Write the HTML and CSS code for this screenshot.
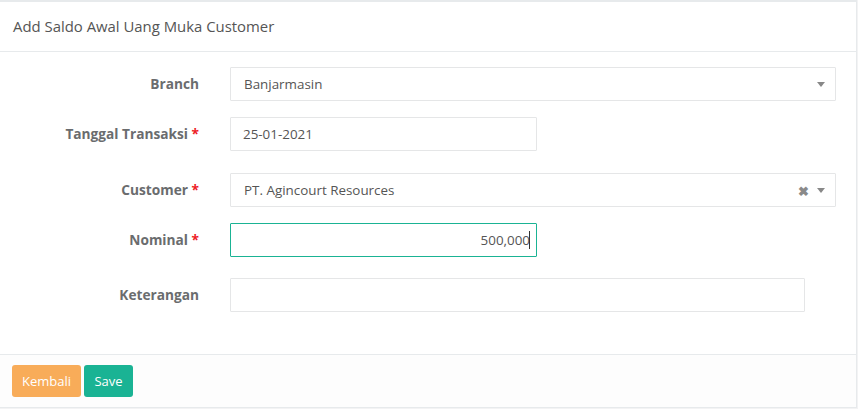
FILE: index.html
```html
<!DOCTYPE html>
<html>
<head>
<meta charset="utf-8">
<link rel="stylesheet" href="styles.css">
</head>
<body>
<div class="card">
  <div class="card-title">Add Saldo Awal Uang Muka Customer</div>
  <div class="card-body">
    <div class="row gap-s">
      <label class="label">Branch</label>
      <div class="select w-full">
        <span class="value">Banjarmasin</span>
        <span class="arrow"></span>
      </div>
    </div>
    <div class="row gap-l">
      <label class="label">Tanggal Transaksi <span class="req">*</span></label>
      <div class="input w-half">25-01-2021</div>
    </div>
    <div class="row gap-s">
      <label class="label">Customer <span class="req">*</span></label>
      <div class="select w-full">
        <span class="value">PT. Agincourt Resources</span>
        <span class="clear">&#x2716;</span>
        <span class="arrow"></span>
      </div>
    </div>
    <div class="row gap-m">
      <label class="label">Nominal <span class="req">*</span></label>
      <div class="input w-half focus">500,000<span class="caret"></span></div>
    </div>
    <div class="row">
      <label class="label">Keterangan</label>
      <div class="input w-wide"></div>
    </div>
  </div>
  <div class="card-footer">
    <button class="btn btn-warning">Kembali</button>
    <button class="btn btn-primary">Save</button>
  </div>
</div>
</body>
</html>
```
FILE: styles.css
```css
html, body {
  margin: 0;
  padding: 0;
}
body {
  background: #f3f3f4;
  font-family: "Open Sans", "Liberation Sans", sans-serif;
  color: #676a6c;
  font-size: 13px;
}
.card {
  width: 856px;
  background: #fff;
  border-top: 2px solid #e7eaec;
  border-right: 1px solid #e7eaec;
}
.card-title {
  padding: 15px 13px;
  line-height: 19px;
  font-size: 14.9px;
  color: #555;
  border-bottom: 1px solid #e7eaec;
}
.card-body {
  padding: 15px 0 42px 0;
}
.row {
  display: grid;
  grid-template-columns: 200px 1fr;
  column-gap: 30px;
  align-items: center;
}
.gap-s { margin-bottom: 16px; }
.gap-l { margin-bottom: 22px; }
.gap-m { margin-bottom: 21px; }
.label {
  text-align: right;
  font-weight: 700;
  font-size: 13.7px;
  color: #6a6c6e;
  padding-right: 1px;
  margin-top: -1px;
}
.req { color: #ed2024; }
.input, .select {
  box-sizing: border-box;
  height: 34px;
  border: 1px solid #e5e6e7;
  border-radius: 1px;
  background: #fff;
  color: #555;
  font-size: 13.4px;
  padding: 0 12px;
  display: flex;
  align-items: center;
  line-height: 20px;
}
.w-full { width: 606px; }
.w-half { width: 307px; }
.w-wide { width: 575px; }
.select .value { flex: 1; padding-left: 1px; }
.select .clear {
  font-size: 13px;
  font-weight: 700;
  color: #8a8a8a;
  margin-right: 8px;
  margin-top: 1px;
}
.select .arrow {
  width: 0;
  height: 0;
  border-left: 4px solid transparent;
  border-right: 4px solid transparent;
  border-top: 5px solid #888;
  margin-right: -2px;
  margin-top: 1px;
}
.input.focus {
  border-color: #1ab394;
  justify-content: flex-end;
  padding-right: 6px;
}
.caret {
  display: inline-block;
  width: 1px;
  height: 18px;
  background: #333;
  margin-left: -1px;
}
.card-footer {
  border-top: 1px solid #e7eaec;
  border-bottom: 1px solid #e7eaec;
  background: #fdfdfd;
  padding: 10px 12px;
  display: flex;
  gap: 3px;
}
.btn {
  font-family: "Open Sans", "Liberation Sans", sans-serif;
  font-size: 13px;
  color: #fff;
  border: none;
  border-radius: 3px;
  height: 32px;
  padding: 0;
  cursor: pointer;
}
.btn-warning { background: #f8ac59; width: 69px; }
.btn-primary { background: #1ab394; width: 49px; }
```
